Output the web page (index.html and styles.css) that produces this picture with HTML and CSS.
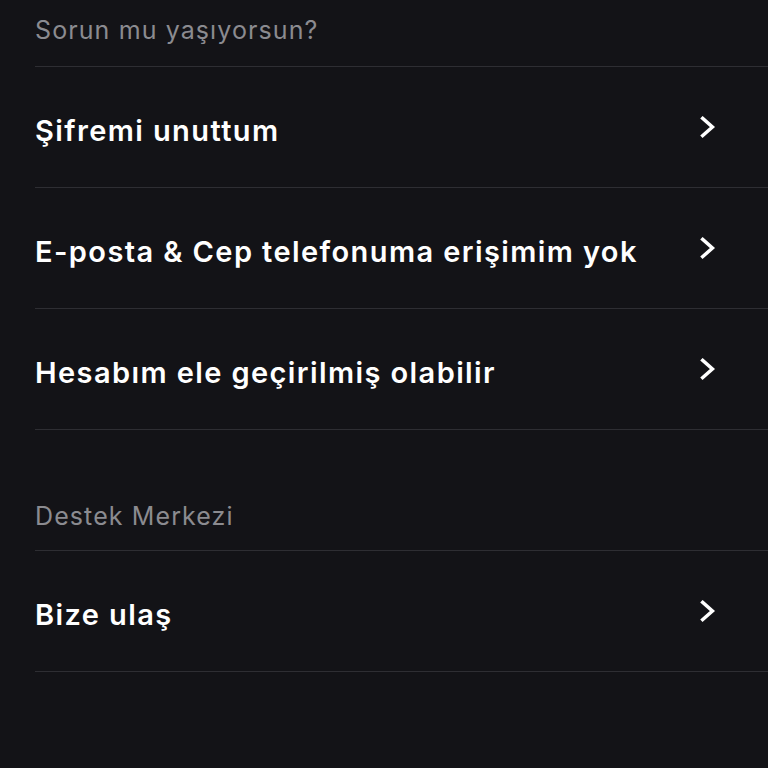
FILE: index.html
```
<!DOCTYPE html>
<html lang="tr">

<head>
    <meta charset="utf-8">
    <meta name="viewport" content="width=device-width, initial-scale=1.0">
    <title>Yardım</title>
    <link rel="stylesheet" href="styles.css">
</head>

<body>

    <div class="bolum">
        <h2 class="baslik ilk">Sorun mu yaşıyorsun?</h2>
        <a class="satir" href="#">
            <span>Şifremi unuttum</span>
            <svg class="ok" viewBox="0 0 24 24"><polyline points="8,4 17,12 8,20"></polyline></svg>
        </a>
        <a class="satir" href="#">
            <span>E-posta &amp; Cep telefonuma erişimim yok</span>
            <svg class="ok" viewBox="0 0 24 24"><polyline points="8,4 17,12 8,20"></polyline></svg>
        </a>
        <a class="satir" href="#">
            <span>Hesabım ele geçirilmiş olabilir</span>
            <svg class="ok" viewBox="0 0 24 24"><polyline points="8,4 17,12 8,20"></polyline></svg>
        </a>
    </div>

    <div class="bolum">
        <h2 class="baslik">Destek Merkezi</h2>
        <a class="satir" href="#">
            <span>Bize ulaş</span>
            <svg class="ok" viewBox="0 0 24 24"><polyline points="8,4 17,12 8,20"></polyline></svg>
        </a>
    </div>

</body>

</html>
```

FILE: styles.css
```
body {
    margin: 0;
    background-color: #131317;
    font-family: Inter, "Noto Sans", sans-serif;
    color: #fff;
}

.bolum {
    padding-left: 35px;
}

.baslik {
    margin: 0;
    height: 121px;
    box-sizing: border-box;
    display: flex;
    align-items: flex-end;
    padding-bottom: 19px;
    font-size: 25px;
    font-weight: 400;
    letter-spacing: 1.1px;
    color: #8b8b90;
    border-bottom: 1px solid #2e2e33;
}

.baslik.ilk {
    height: 67px;
    padding-bottom: 21px;
}

.satir {
    display: flex;
    align-items: center;
    justify-content: space-between;
    height: 121px;
    box-sizing: border-box;
    padding-right: 48px;
    border-bottom: 1px solid #2e2e33;
    color: #fff;
    text-decoration: none;
    font-size: 29px;
    font-weight: 600;
    letter-spacing: 1.4px;
}

.satir span {
    padding-top: 6px;
}

.ok {
    width: 26px;
    height: 26px;
}

.ok polyline {
    fill: none;
    stroke: #fff;
    stroke-width: 3.2;
    stroke-linecap: square;
    stroke-linejoin: miter;
}
```
